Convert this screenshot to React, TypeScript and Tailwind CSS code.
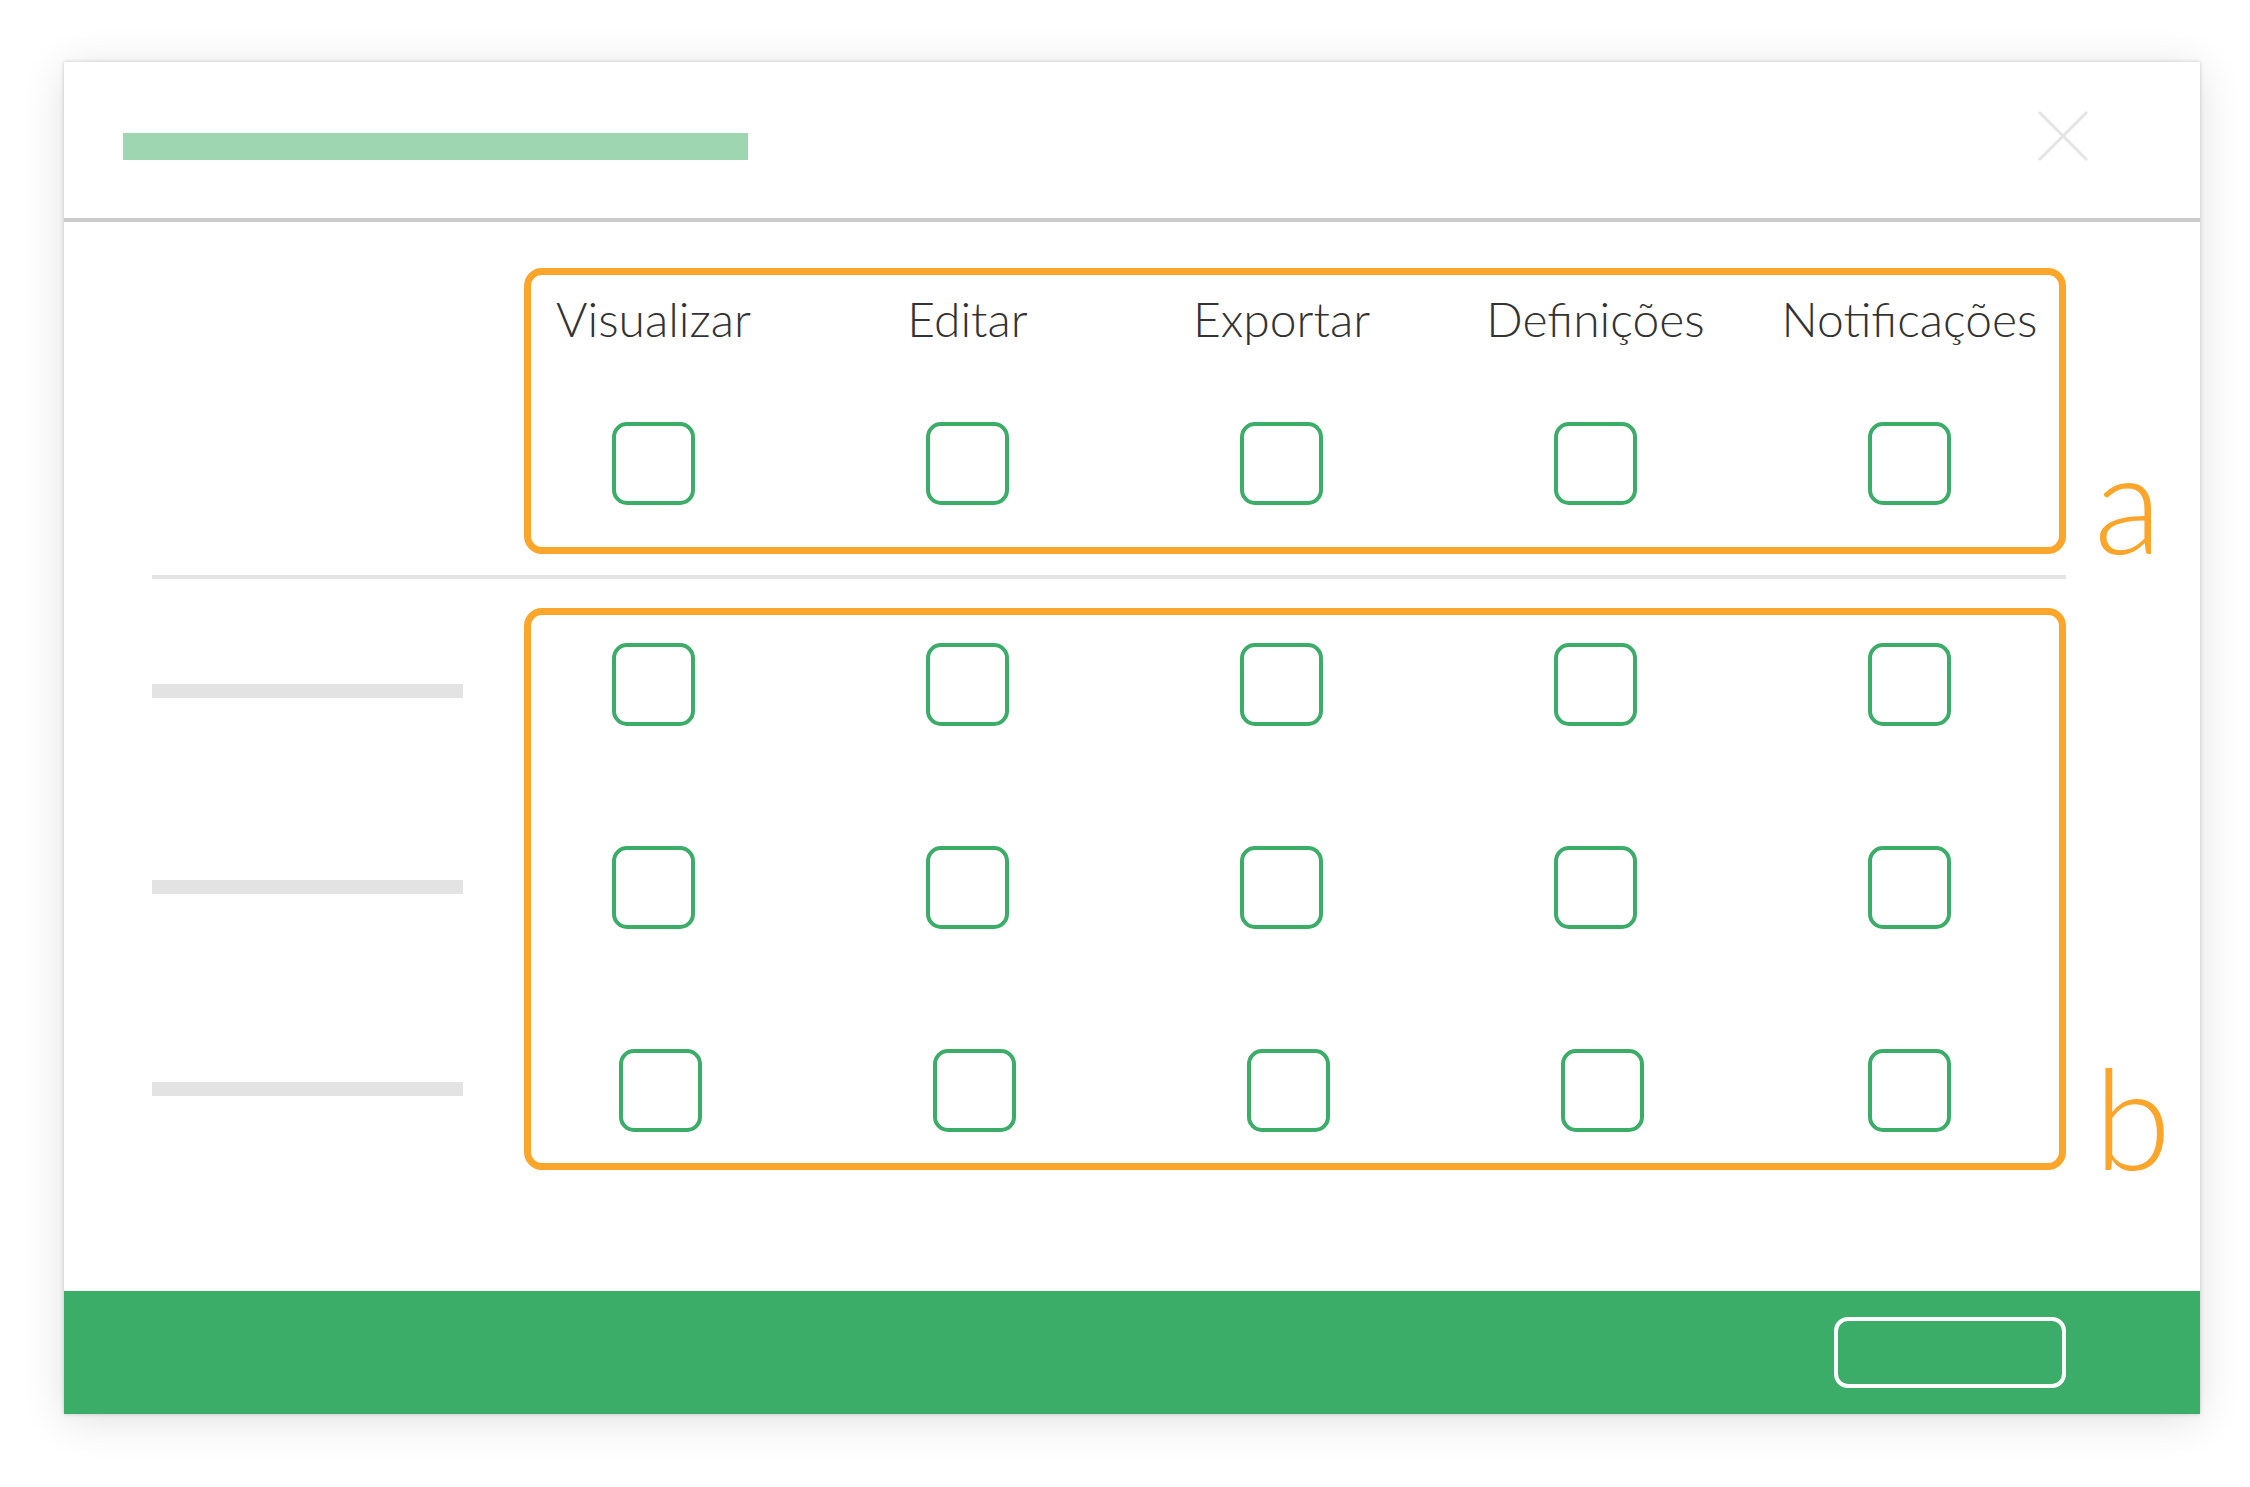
const columns = ["Visualizar", "Editar", "Exportar", "Definições", "Notificações"];

function Checkbox({ shift = false }: { shift?: boolean }) {
  return (
    <div
      className={`w-[83px] h-[83px] rounded-[15px] border-[4px] border-[#3bad69] bg-white ${
        shift ? "translate-x-[7px]" : ""
      }`}
    />
  );
}

function SideLetter({ children }: { children: string }) {
  return (
    <span className="ml-[28px] -mb-[16px] text-[140px] leading-none font-light text-[#fba52b] font-['Lato',sans-serif]">
      {children}
    </span>
  );
}

export default function App() {
  return (
    <div className="min-h-screen bg-white pt-[62px] pl-[64px] font-['Lato',sans-serif]">
      <div className="w-[2136px] h-[1352px] bg-white flex flex-col shadow-[0_0_4px_rgba(0,0,0,0.2),0_6px_40px_rgba(0,0,0,0.12)]">
        {/* header */}
        <div className="h-[156px] flex items-start justify-between pl-[59px] pr-[111px]">
          <div className="mt-[71px] w-[625px] h-[27px] bg-[#9ed6b2]" />
          <svg className="mt-[48px]" width="52" height="52" viewBox="0 0 52 52">
            <path d="M2 2 L50 50 M50 2 L2 50" stroke="#e4e4e4" strokeWidth="3" fill="none" />
          </svg>
        </div>
        <div className="h-[4px] bg-[#cbcbcb]" />

        {/* body */}
        <div className="pl-[88px] pt-[46px]">
          <div className="flex items-end">
            <div className="w-[372px]" />
            <div className="w-[1542px] h-[286px] rounded-[18px] border-[7px] border-[#fba52b] pl-[81px] pt-[20px]">
              <div className="grid grid-cols-[repeat(5,83px)] gap-x-[231px]">
                {columns.map((c) => (
                  <div key={c} className="flex justify-center">
                    <span className="whitespace-nowrap text-[48px] leading-none font-light text-[#333333]">
                      {c}
                    </span>
                  </div>
                ))}
              </div>
              <div className="mt-[79px] grid grid-cols-[repeat(5,83px)] gap-x-[231px]">
                {columns.map((c) => (
                  <Checkbox key={c} />
                ))}
              </div>
            </div>
            <SideLetter>a</SideLetter>
          </div>

          <div className="mt-[21px] w-[1914px] h-[4px] bg-[#e4e4e4]" />

          <div className="mt-[29px] flex items-end">
            <div className="w-[372px] self-stretch flex flex-col">
              <div className="mt-[76px] w-[311px] h-[14px] bg-[#e3e3e3]" />
              <div className="mt-[182px] w-[311px] h-[14px] bg-[#e3e3e3]" />
              <div className="mt-[188px] w-[311px] h-[14px] bg-[#e3e3e3]" />
            </div>
            <div className="w-[1542px] h-[562px] rounded-[18px] border-[7px] border-[#fba52b] pl-[81px] pt-[28px] flex flex-col gap-y-[120px]">
              {[0, 1, 2].map((r) => (
                <div key={r} className="grid grid-cols-[repeat(5,83px)] gap-x-[231px]">
                  {columns.map((c, i) => (
                    <Checkbox key={c} shift={r === 2 && i < 4} />
                  ))}
                </div>
              ))}
            </div>
            <SideLetter>b</SideLetter>
          </div>
        </div>

        {/* footer */}
        <div className="mt-auto h-[123px] bg-[#3bad69] flex items-center justify-end pr-[134px]">
          <div className="w-[232px] h-[71px] rounded-[14px] border-[4px] border-white" />
        </div>
      </div>
    </div>
  );
}
